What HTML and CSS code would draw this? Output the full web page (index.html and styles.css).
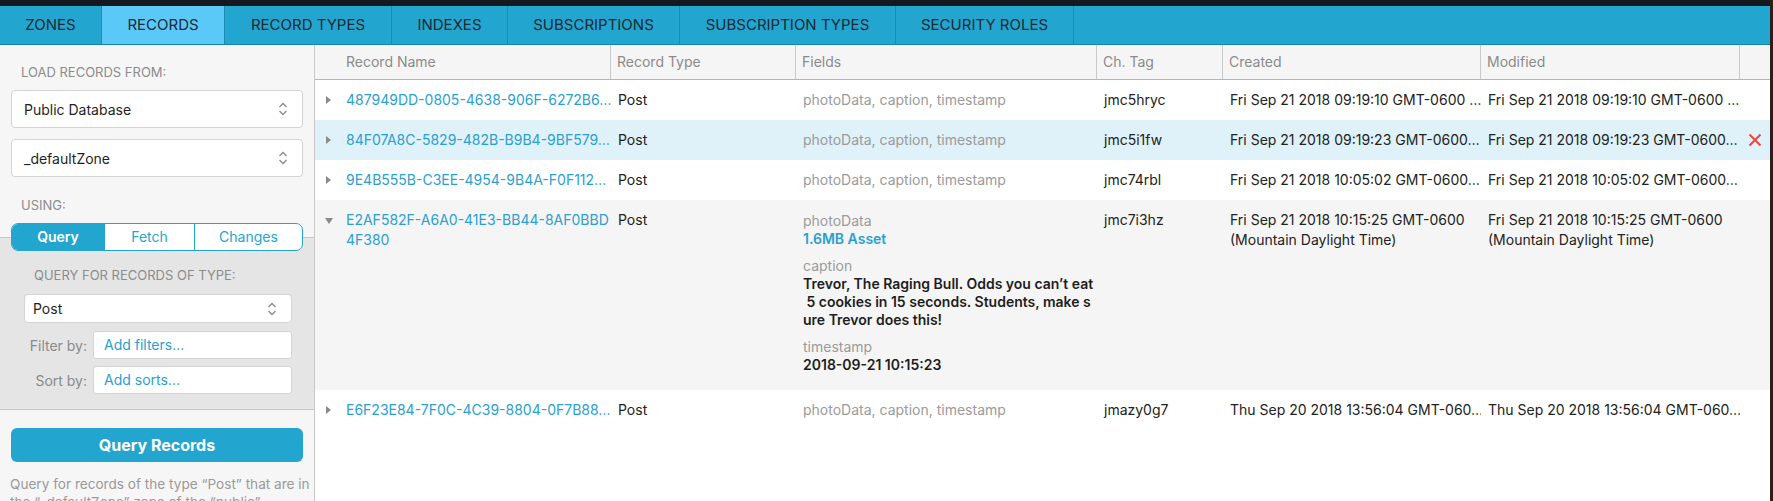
FILE: index.html
```html
<!DOCTYPE html>
<html>
<head>
<meta charset="utf-8">
<link rel="stylesheet" href="styles.css">
</head>
<body>
<div class="window">
  <div class="topbar"></div>
  <nav class="tabs">
    <div class="tab t-zones">Zones</div>
    <div class="tab t-records active">Records</div>
    <div class="tab t-types">Record Types</div>
    <div class="tab t-indexes">Indexes</div>
    <div class="tab t-subs">Subscriptions</div>
    <div class="tab t-subtypes">Subscription Types</div>
    <div class="tab t-roles">Security Roles</div>
  </nav>
  <div class="main">
    <aside class="sidebar">
      <div class="sb-top">
        <div class="sb-label">Load records from:</div>
        <div class="select big">
          <span>Public Database</span>
          <svg class="updown" width="10" height="16" viewBox="0 0 10 16"><path d="M1.5 6 L5 2.5 L8.5 6 M1.5 10 L5 13.5 L8.5 10" fill="none" stroke="#8a8a8a" stroke-width="1.3"/></svg>
        </div>
        <div class="select big second">
          <span>_defaultZone</span>
          <svg class="updown" width="10" height="16" viewBox="0 0 10 16"><path d="M1.5 6 L5 2.5 L8.5 6 M1.5 10 L5 13.5 L8.5 10" fill="none" stroke="#8a8a8a" stroke-width="1.3"/></svg>
        </div>
        <div class="sb-label using">Using:</div>
        <div class="segmented">
          <div class="seg on">Query</div>
          <div class="seg">Fetch</div>
          <div class="seg last">Changes</div>
        </div>
      </div>
      <div class="sb-query">
        <div class="sb-label sub">Query for records of type:</div>
        <div class="select small">
          <span>Post</span>
          <svg class="updown" width="10" height="16" viewBox="0 0 10 16"><path d="M1.5 6 L5 2.5 L8.5 6 M1.5 10 L5 13.5 L8.5 10" fill="none" stroke="#8a8a8a" stroke-width="1.3"/></svg>
        </div>
        <div class="field-row">
          <label class="fr-label">Filter by:</label>
          <div class="input">Add filters...</div>
        </div>
        <div class="field-row">
          <label class="fr-label">Sort by:</label>
          <div class="input">Add sorts...</div>
        </div>
      </div>
      <button class="primary">Query Records</button>
      <p class="desc"><span class="dline">Query for records of the type “Post” that are in</span><span class="dline">the “_defaultZone” zone of the “public”</span><span class="dline">database.</span></p>
    </aside>
    <section class="table">
      <div class="thead">
        <div class="th name">Record Name</div>
        <div class="th">Record Type</div>
        <div class="th">Fields</div>
        <div class="th">Ch. Tag</div>
        <div class="th">Created</div>
        <div class="th">Modified</div>
        <div class="th last"></div>
      </div>

      <div class="row">
        <div class="td name"><span class="tri"></span><span class="link">487949DD-0805-4638-906F-6272B6…</span></div>
        <div class="td">Post</div>
        <div class="td muted">photoData, caption, timestamp</div>
        <div class="td">jmc5hryc</div>
        <div class="td">Fri Sep 21 2018 09:19:10 GMT-0600 …</div>
        <div class="td">Fri Sep 21 2018 09:19:10 GMT-0600 …</div>
        <div class="td act"></div>
      </div>

      <div class="row hover">
        <div class="td name"><span class="tri"></span><span class="link">84F07A8C-5829-482B-B9B4-9BF579…</span></div>
        <div class="td">Post</div>
        <div class="td muted">photoData, caption, timestamp</div>
        <div class="td">jmc5i1fw</div>
        <div class="td">Fri Sep 21 2018 09:19:23 GMT-0600…</div>
        <div class="td">Fri Sep 21 2018 09:19:23 GMT-0600…</div>
        <div class="td act"><svg width="14" height="14" viewBox="0 0 14 14"><path d="M1.5 1.5 L12.5 12.5 M12.5 1.5 L1.5 12.5" stroke="#f2433d" stroke-width="2" fill="none"/></svg></div>
      </div>

      <div class="row">
        <div class="td name"><span class="tri"></span><span class="link">9E4B555B-C3EE-4954-9B4A-F0F112…</span></div>
        <div class="td">Post</div>
        <div class="td muted">photoData, caption, timestamp</div>
        <div class="td">jmc74rbl</div>
        <div class="td">Fri Sep 21 2018 10:05:02 GMT-0600…</div>
        <div class="td">Fri Sep 21 2018 10:05:02 GMT-0600…</div>
        <div class="td act"></div>
      </div>

      <div class="row open">
        <div class="td name wrap"><span class="tri down"></span><span class="link">E2AF582F-A6A0-41E3-BB44-8AF0BBD<br>4F380</span></div>
        <div class="td">Post</div>
        <div class="td fields">
          <div class="fgroup">
            <div class="flabel">photoData</div>
            <div class="fval asset">1.6MB Asset</div>
          </div>
          <div class="fgroup">
            <div class="flabel">caption</div>
            <div class="fval">Trevor, The Raging Bull. Odds you can’t eat</div>
            <div class="fval">&nbsp;5 cookies in 15 seconds. Students, make s</div>
            <div class="fval">ure Trevor does this!</div>
          </div>
          <div class="fgroup">
            <div class="flabel">timestamp</div>
            <div class="fval">2018-09-21 10:15:23</div>
          </div>
        </div>
        <div class="td">jmc7i3hz</div>
        <div class="td wrap">Fri Sep 21 2018 10:15:25 GMT-0600<br>(Mountain Daylight Time)</div>
        <div class="td wrap">Fri Sep 21 2018 10:15:25 GMT-0600<br>(Mountain Daylight Time)</div>
        <div class="td act"></div>
      </div>

      <div class="row">
        <div class="td name"><span class="tri"></span><span class="link">E6F23E84-7F0C-4C39-8804-0F7B88…</span></div>
        <div class="td">Post</div>
        <div class="td muted">photoData, caption, timestamp</div>
        <div class="td">jmazy0g7</div>
        <div class="td">Thu Sep 20 2018 13:56:04 GMT-060…</div>
        <div class="td">Thu Sep 20 2018 13:56:04 GMT-060…</div>
        <div class="td act"></div>
      </div>
    </section>
  </div>
</div>
</body>
</html>
```

FILE: styles.css
```css
* { box-sizing: border-box; }
html, body { margin: 0; padding: 0; }
body {
  width: 1773px;
  height: 501px;
  overflow: hidden;
  background: #2a1f1c;
  font-family: "Inter", "Helvetica Neue", Arial, sans-serif;
  font-size: 14px;
  color: #222;
}
.window {
  width: 1770px;
  height: 501px;
  display: flex;
  flex-direction: column;
  background: #fff;
}
.topbar {
  height: 6px;
  background: #141920;
  flex: none;
}
.tabs {
  height: 39px;
  flex: none;
  display: flex;
  background: #22a6d0;
  border-bottom: 1px solid #1886ab;
}
.tab {
  line-height: 38px;
  text-align: center;
  text-transform: uppercase;
  font-size: 15px;
  color: #1b2a35;
  border-right: 1px solid #1a8cb2;
  white-space: nowrap;
}
.t-zones { width: 102px; }
.t-records { width: 123px; }
.t-types { width: 167px; }
.t-indexes { width: 116px; }
.t-subs { width: 172px; }
.t-subtypes { width: 216px; }
.t-roles { width: 178px; }
.tab.active { background: #5bc9f8; }

.main {
  flex: 1;
  display: flex;
  min-height: 0;
}
.sidebar {
  width: 315px;
  flex: none;
  background: #f6f6f6;
  border-right: 1px solid #c9c9c9;
  overflow: hidden;
}
.sb-top { padding: 19px 11px 0 11px; }
.sb-label {
  font-size: 13px;
  line-height: 16px;
  color: #8c8c8c;
  text-transform: uppercase;
  padding-left: 10px;
  margin-bottom: 10px;
}
.sb-label.using { margin-top: 20px; }
.select {
  display: flex;
  align-items: center;
  justify-content: space-between;
  background: #fff;
  border: 1px solid #d3d3d3;
  border-radius: 4px;
  color: #1f1f1f;
}
.select.big { height: 38px; padding: 0 14px 0 12px; font-size: 14px; }
.select.second { margin-top: 11px; }
.select.small { height: 29px; padding: 0 14px 0 8px; }
.segmented {
  position: relative;
  display: flex;
  height: 28px;
  border: 1px solid #22a6d0;
  border-radius: 7px;
  overflow: hidden;
  background: #fff;
  margin-bottom: -14px;
}
.seg {
  text-align: center;
  line-height: 26px;
  color: #22a6d0;
  font-size: 14px;
  border-right: 1px solid #22a6d0;
  width: 90px;
}
.seg.on { background: #22a6d0; color: #fff; font-weight: 600; width: 93px; }
.seg.last { border-right: 0; flex: 1; }
.sb-query {
  background: #e5e5e5;
  border-top: 1px solid #c8c8c8;
  border-bottom: 1px solid #c8c8c8;
  padding: 29px 22px 15px 24px;
}
.sb-label.sub { padding-left: 10px; margin-bottom: 11px; }
.field-row {
  display: flex;
  align-items: center;
  margin-top: 7px;
}
.select.small + .field-row { margin-top: 8px; }
.fr-label {
  width: 63px;
  text-align: right;
  margin-right: 6px;
  color: #8a8a8a;
  font-size: 14px;
}
.input {
  flex: 1;
  height: 28px;
  background: #fff;
  border: 1px solid #d3d3d3;
  border-radius: 3px;
  padding-left: 10px;
  line-height: 26px;
  color: #2a9fd0;
}
.primary {
  display: block;
  margin: 18px 11px 0 11px;
  width: 292px;
  height: 34px;
  border: 0;
  border-radius: 6px;
  background: #22a6d0;
  color: #fff;
  font-family: inherit;
  font-size: 16px;
  font-weight: 700;
}
.desc {
  margin: 13px 10px 0 10px;
  font-size: 13.6px;
  line-height: 18px;
  color: #9a9a9a;
}
.dline { display: block; white-space: nowrap; }

.table {
  flex: 1;
  background: #fff;
}
.thead, .row {
  display: grid;
  grid-template-columns: 296px 185px 301px 126px 258px 259px 1fr;
}
.thead {
  height: 35px;
  background: #f5f5f5;
  border-bottom: 1px solid #b6b6b6;
}
.th {
  border-right: 1px solid #c9c9c9;
  line-height: 34px;
  color: #8b8b8b;
  font-size: 14px;
  padding-left: 6px;
  white-space: nowrap;
}
.th.name { padding-left: 31px; }
.th.last { border-right: 0; }
.row { align-items: start; }
.row.hover { background: #dff1f9; }
.row.open { background: #f5f5f5; }
.td {
  padding: 10px 0 10px 7px;
  line-height: 20px;
  white-space: nowrap;
  overflow: hidden;
}
.td.name { padding-left: 11px; display: flex; align-items: flex-start; }
.td.muted { color: #9b9b9b; }
.link { color: #2a9fd0; }
.tri {
  flex: none;
  width: 0;
  height: 0;
  margin: 6px 15px 0 0;
  border-top: 4px solid transparent;
  border-bottom: 4px solid transparent;
  border-left: 5px solid #8a8a8a;
}
.tri.down {
  margin: 8px 13px 0 -1px;
  border-left: 4px solid transparent;
  border-right: 4px solid transparent;
  border-top: 6px solid #8a8a8a;
  border-bottom: 0;
}
.td.act {
  padding: 13px 0 0 8px;
  line-height: 0;
}
.td.fields {
  padding: 12px 0 16px 7px;
}
.fgroup + .fgroup { margin-top: 9px; }
.flabel { line-height: 18px; color: #9b9b9b; }
.fval { line-height: 18px; font-weight: 600; color: #1e1e1e; }
.fval.asset { color: #2a9fd0; }
```
